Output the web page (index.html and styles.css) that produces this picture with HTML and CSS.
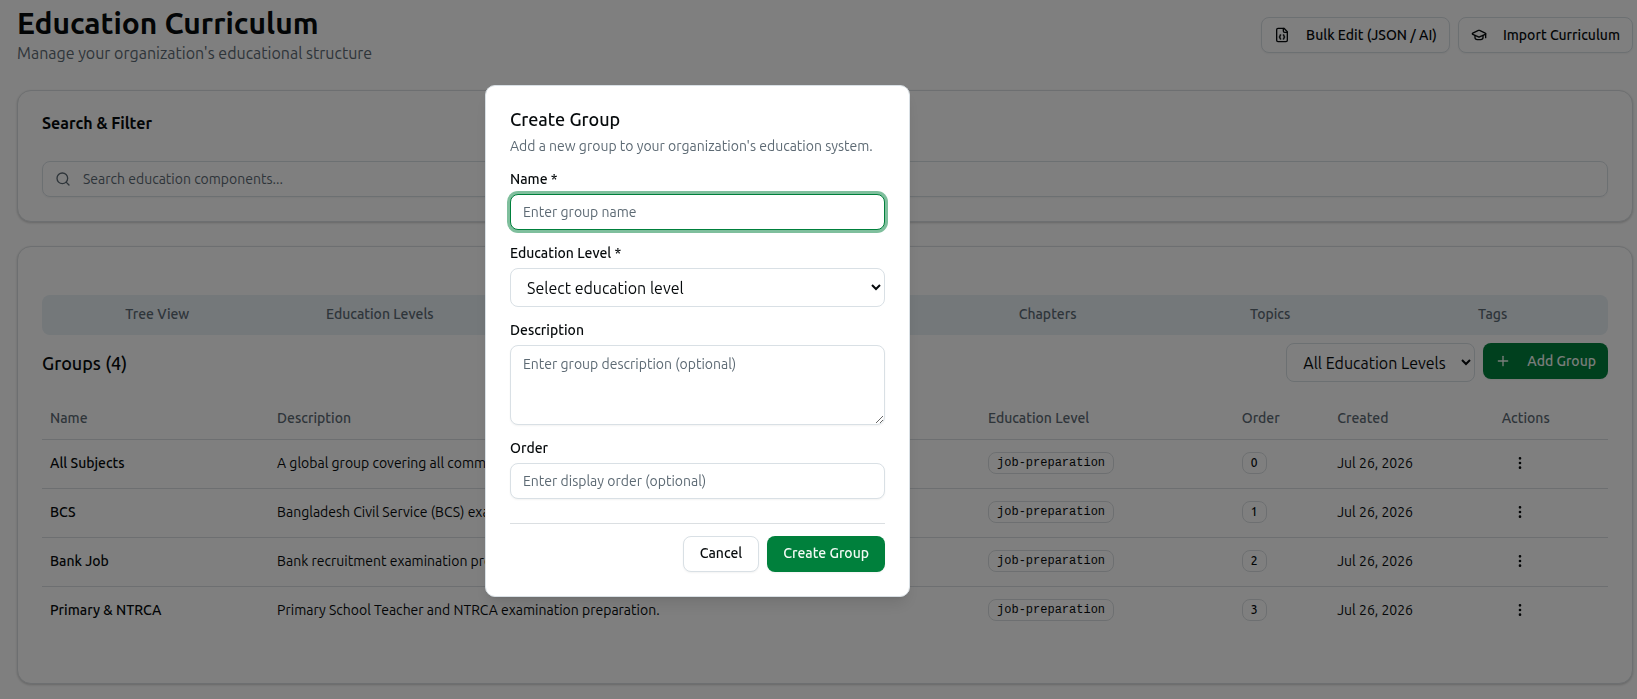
FILE: index.html
```html
<!DOCTYPE html>
<html lang="en">
<head>
<meta charset="utf-8">
<title>Education Curriculum</title>
<link rel="stylesheet" href="styles.css">
</head>
<body>
<main class="page">
  <header class="page-header">
    <div>
      <h1 class="page-title">Education Curriculum</h1>
      <p class="page-subtitle">Manage your organization's educational structure</p>
    </div>
    <div class="actions">
      <button class="btn btn-outline btn-icon" type="button">
        <svg class="icon" viewBox="0 0 24 24"><path d="M15 2H6a2 2 0 0 0-2 2v16a2 2 0 0 0 2 2h12a2 2 0 0 0 2-2V7Z"/><path d="M14 2v4a2 2 0 0 0 2 2h4"/><path d="M10 12a1 1 0 0 0-1 1v1a1 1 0 0 1-1 1 1 1 0 0 1 1 1v1a1 1 0 0 0 1 1"/><path d="M14 18a1 1 0 0 0 1-1v-1a1 1 0 0 1 1-1 1 1 0 0 1-1-1v-1a1 1 0 0 0-1-1"/></svg>
        Bulk Edit (JSON / AI)
      </button>
      <button class="btn btn-outline btn-icon" type="button">
        <svg class="icon" viewBox="0 0 24 24"><path d="M21.42 10.922a1 1 0 0 0-.019-1.838L12.83 5.18a2 2 0 0 0-1.66 0L2.6 9.08a1 1 0 0 0 0 1.832l8.57 3.908a2 2 0 0 0 1.66 0z"/><path d="M22 10v6"/><path d="M6 12.5V16a6 3 0 0 0 12 0v-3.5"/></svg>
        Import Curriculum
      </button>
    </div>
  </header>

  <section class="card">
    <h2 class="card-title">Search &amp; Filter</h2>
    <label class="search">
      <svg class="icon" viewBox="0 0 24 24"><circle cx="11" cy="11" r="8"/><path d="m21 21-4.300-4.300"/></svg>
      <input class="search-input" type="search" placeholder="Search education components..." aria-label="Search education components">
    </label>
  </section>

  <section class="card card-groups">
    <nav class="tabs" role="tablist">
      <button class="tab" role="tab" type="button">Tree View</button>
      <button class="tab" role="tab" type="button">Education Levels</button>
      <button class="tab tab-active" role="tab" type="button" aria-selected="true">Groups</button>
      <button class="tab" role="tab" type="button">Subjects</button>
      <button class="tab" role="tab" type="button">Chapters</button>
      <button class="tab" role="tab" type="button">Topics</button>
      <button class="tab" role="tab" type="button">Tags</button>
    </nav>
    <div class="toolbar">
      <h3 class="toolbar-title">Groups (4)</h3>
      <div class="actions">
        <select class="select select-filter" aria-label="Filter by education level"><option>All Education Levels</option></select>
        <button class="btn btn-primary btn-icon" type="button">
          <svg class="icon" viewBox="0 0 24 24"><path d="M5 12h14"/><path d="M12 5v14"/></svg>
          Add Group
        </button>
      </div>
    </div>
    <table class="table">
      <colgroup><col class="col-name"><col class="col-description"><col class="col-level"><col class="col-order"><col class="col-created"><col class="col-actions"></colgroup>
      <thead>
        <tr><th>Name</th><th>Description</th><th>Education Level</th><th>Order</th><th>Created</th><th>Actions</th></tr>
      </thead>
      <tbody>
        <tr><td class="name">All Subjects</td><td>A global group covering all common subjects.</td><td><span class="badge badge-code">job-preparation</span></td><td><span class="badge">0</span></td><td>Jul 26, 2026</td><td><button class="more" type="button" aria-label="Actions for All Subjects"><svg class="icon" viewBox="0 0 24 24"><circle cx="12" cy="12" r="1"/><circle cx="12" cy="5" r="1"/><circle cx="12" cy="19" r="1"/></svg></button></td></tr>
        <tr><td class="name">BCS</td><td>Bangladesh Civil Service (BCS) examination.</td><td><span class="badge badge-code">job-preparation</span></td><td><span class="badge">1</span></td><td>Jul 26, 2026</td><td><button class="more" type="button" aria-label="Actions for BCS"><svg class="icon" viewBox="0 0 24 24"><circle cx="12" cy="12" r="1"/><circle cx="12" cy="5" r="1"/><circle cx="12" cy="19" r="1"/></svg></button></td></tr>
        <tr><td class="name">Bank Job</td><td>Bank recruitment examination preparation.</td><td><span class="badge badge-code">job-preparation</span></td><td><span class="badge">2</span></td><td>Jul 26, 2026</td><td><button class="more" type="button" aria-label="Actions for Bank Job"><svg class="icon" viewBox="0 0 24 24"><circle cx="12" cy="12" r="1"/><circle cx="12" cy="5" r="1"/><circle cx="12" cy="19" r="1"/></svg></button></td></tr>
        <tr><td class="name">Primary &amp; NTRCA</td><td>Primary School Teacher and NTRCA examination preparation.</td><td><span class="badge badge-code">job-preparation</span></td><td><span class="badge">3</span></td><td>Jul 26, 2026</td><td><button class="more" type="button" aria-label="Actions for Primary &amp; NTRCA"><svg class="icon" viewBox="0 0 24 24"><circle cx="12" cy="12" r="1"/><circle cx="12" cy="5" r="1"/><circle cx="12" cy="19" r="1"/></svg></button></td></tr>
      </tbody>
    </table>
  </section>
</main>

<div class="overlay">
  <form class="dialog" role="dialog" aria-modal="true" aria-labelledby="dialog-title">
    <div class="dialog-header">
      <h2 class="dialog-title" id="dialog-title">Create Group</h2>
      <p class="dialog-text">Add a new group to your organization's education system.</p>
    </div>
    <div class="field">
      <label class="label" for="name">Name *</label>
      <input class="input" id="name" type="text" placeholder="Enter group name" autofocus>
    </div>
    <div class="field">
      <label class="label" for="level">Education Level *</label>
      <select class="select" id="level"><option>Select education level</option></select>
    </div>
    <div class="field">
      <label class="label" for="description">Description</label>
      <textarea class="input textarea" id="description" placeholder="Enter group description (optional)"></textarea>
    </div>
    <div class="field">
      <label class="label" for="order">Order</label>
      <input class="input" id="order" type="number" placeholder="Enter display order (optional)">
    </div>
    <div class="dialog-footer">
      <button class="btn btn-outline" type="button">Cancel</button>
      <button class="btn btn-primary" type="submit">Create Group</button>
    </div>
  </form>
</div>
</body>
</html>
```
FILE: styles.css
```css
:root {
  --text: #060a0c;
  --muted: #5d6a74;
  --border: #d9e0e5;
  --line: #dbdfe2;
  --primary: #00803c;
}

* { box-sizing: border-box; }

body {
  margin: 0;
  background: #fff;
  color: var(--text);
  font: 400 16px/24px Ubuntu, "Open Sans", sans-serif;
}

h1, h2, h3, p { margin: 0; }

button, input, select, textarea { font: inherit; color: inherit; }

.icon {
  width: 16px;
  height: 16px;
  flex-shrink: 0;
  fill: none;
  stroke: currentColor;
  stroke-width: 2;
  stroke-linecap: round;
  stroke-linejoin: round;
}

.page {
  display: flex;
  flex-direction: column;
  gap: 24px;
  padding: 5px 4px 16px 17px;
}

.page-header, .toolbar {
  display: flex;
  justify-content: space-between;
}

.page-header { align-items: center; padding-bottom: 1px; }
.page-title { font-size: 30px; line-height: 36px; font-weight: 700; }
.page-subtitle { color: var(--muted); }

.actions { display: flex; align-items: flex-start; gap: 8px; }

.btn {
  height: 36px;
  padding: 0 16px 2px;
  border: 0;
  border-radius: 8px;
  font-size: 14px;
  line-height: 20px;
  font-weight: 500;
  white-space: nowrap;
  box-shadow: 0 1px 2px rgb(0 0 0 / 5%);
}
.btn-outline { background: #fff; border: 1px solid var(--border); }
.btn-primary { background: var(--primary); color: #f4fbf6; }
.btn-icon {
  display: flex;
  align-items: center;
  gap: 16px;
  padding: 0 12px;
}

.card {
  padding: 24px;
  border: 1px solid var(--line);
  border-radius: 14px;
  background: #fff;
  box-shadow: 0 1px 3px rgb(0 0 0 / 10%), 0 1px 2px rgb(0 0 0 / 10%);
}
.card-title { margin-bottom: 30px; font-size: 16px; line-height: 16px; font-weight: 600; }
.card-groups { padding: 48px 24px; }

.search {
  display: flex;
  align-items: center;
  gap: 12px;
  height: 36px;
  padding: 0 12px;
  border: 1px solid var(--border);
  border-radius: 8px;
  color: var(--muted);
  box-shadow: 0 1px 2px rgb(0 0 0 / 5%);
}
.search-input {
  flex: 1;
  padding: 0;
  border: 0;
  background: transparent;
  font-size: 14px;
  line-height: 20px;
  outline: 0;
}

::placeholder { color: var(--muted); opacity: 1; }

.tabs {
  display: grid;
  grid-template-columns: repeat(7, 1fr);
  height: 40px;
  margin-bottom: 8px;
  padding: 4px;
  border-radius: 8px;
  background: #e8f0f5;
}
.tab {
  padding: 0 12px 2px;
  border: 0;
  border-radius: 6px;
  background: transparent;
  color: var(--muted);
  font-size: 14px;
  line-height: 20px;
  font-weight: 500;
}
.tab-active { background: #fff; color: var(--text); }

.toolbar { align-items: center; margin-bottom: 16px; }
.toolbar-title { font-size: 18px; line-height: 28px; font-weight: 500; }

.select {
  height: 39px;
  padding: 0 0 0 12px;
  border: 1px solid var(--border);
  border-radius: 8px;
  background: #fff;
}
.select-filter { min-width: 189px; }

.table {
  width: 100%;
  table-layout: fixed;
  border-collapse: collapse;
  font-size: 14px;
  line-height: 20px;
}
.table th, .table td { padding: 0 8px; text-align: left; vertical-align: middle; white-space: nowrap; }
.table th { height: 41px; color: var(--muted); font-weight: 500; }
.table td { height: 49px; padding-bottom: 1px; }
.table tr { border-bottom: 1px solid var(--line); }
.table tbody tr:last-child { border-bottom: 0; }
.table .name { font-weight: 500; }
.col-name { width: 14.5%; }
.col-description { width: 45.4%; }
.col-level { width: 16.2%; }
.col-order { width: 6.1%; }
.col-created { width: 10.5%; }
.col-actions { width: 7.3%; }

.badge {
  display: inline-block;
  padding: 2px 8px;
  border: 1px solid var(--line);
  border-radius: 8px;
  font-size: 12px;
  line-height: 16px;
  font-weight: 500;
  vertical-align: middle;
}
.badge-code { font-family: "Liberation Mono", monospace; }

.more {
  display: grid;
  place-items: center;
  width: 36px;
  height: 32px;
  padding: 0;
  border: 0;
  background: transparent;
}

.overlay {
  position: fixed;
  inset: 0;
  display: flex;
  justify-content: center;
  align-items: flex-start;
  padding: 85px 242px 16px 0;
  background: rgb(0 0 0 / 50%);
}

.dialog {
  display: flex;
  flex-direction: column;
  gap: 16px;
  width: 100%;
  max-width: 425px;
  padding: 24px;
  border: 1px solid var(--border);
  border-radius: 10px;
  background: #fff;
  box-shadow: 0 10px 15px -3px rgb(0 0 0 / 10%), 0 4px 6px -4px rgb(0 0 0 / 10%);
}
.dialog-header, .field { display: flex; flex-direction: column; gap: 8px; }
.dialog-title { font-size: 18px; line-height: 18px; font-weight: 500; }
.dialog-text { color: var(--muted); font-size: 14px; line-height: 20px; }
.label { font-size: 14px; line-height: 14px; font-weight: 500; }

.input {
  height: 36px;
  padding: 4px 12px;
  border: 1px solid var(--border);
  border-radius: 8px;
  background: #fff;
  font-size: 14px;
  line-height: 20px;
  outline: 0;
  box-shadow: 0 1px 2px rgb(0 0 0 / 5%);
}
.input:focus { border-color: var(--primary); box-shadow: 0 0 0 3px rgb(0 128 60 / 50%); }
.textarea { height: 80px; padding: 8px 12px; resize: vertical; }

.dialog-footer {
  display: flex;
  justify-content: flex-end;
  gap: 8px;
  margin-top: 8px;
  padding-top: 12px;
  border-top: 1px solid var(--line);
}
```
